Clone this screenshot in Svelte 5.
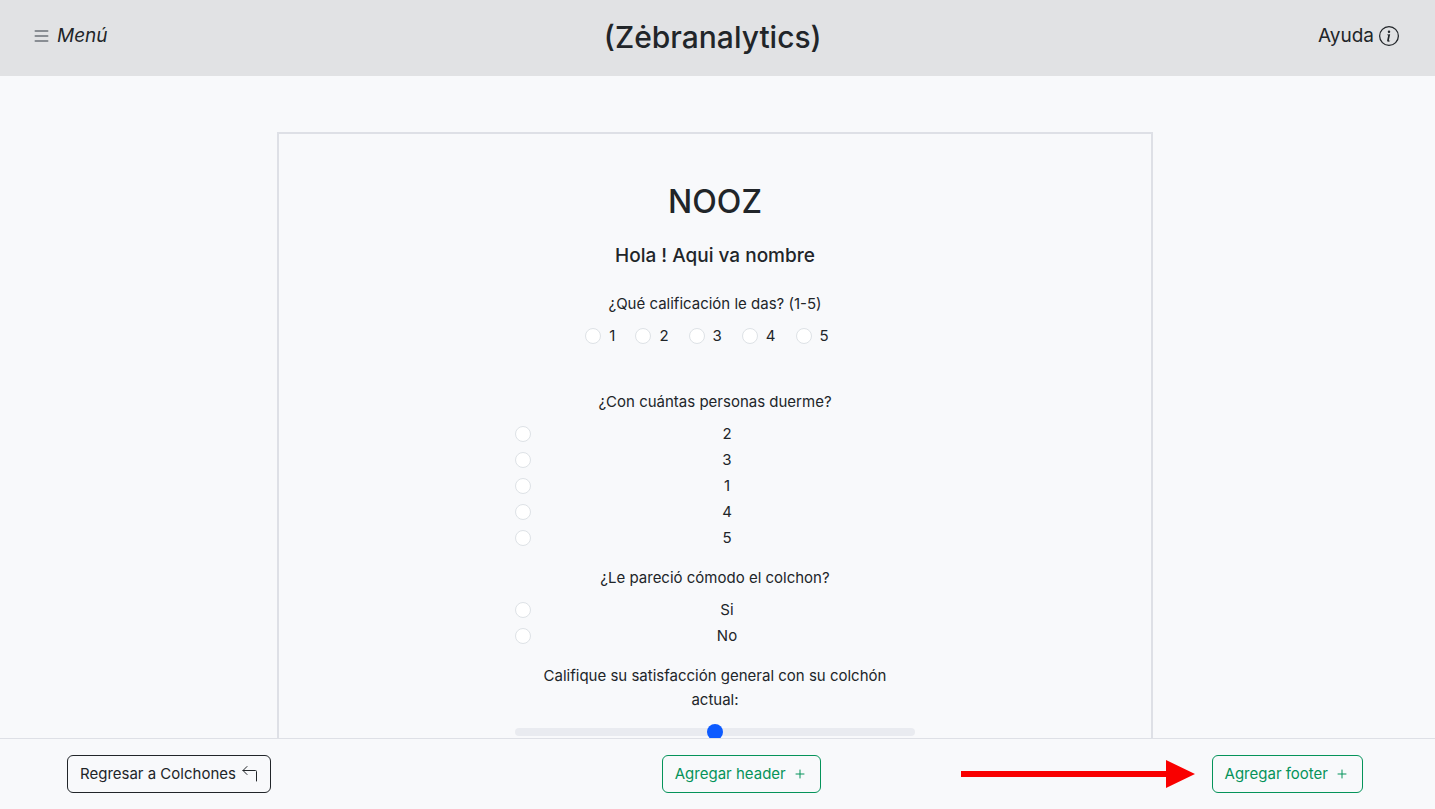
<script>
  const scores = ['1', '2', '3', '4', '5'];
  const choices = [
    { id: 'people', title: '¿Con cuántas personas duerme?', options: ['2', '3', '1', '4', '5'] },
    { id: 'comfort', title: '¿Le pareció cómodo el colchon?', options: ['Si', 'No'] }
  ];
  let satisfaction = $state(50);
</script>

<div class="page">
  <header class="topbar">
    <button class="nav-item menu" type="button">
      <svg class="bars" viewBox="0 0 14 12" aria-hidden="true">
        <path d="M.8 1h12.4M.8 6h12.4M.8 11h12.4" />
      </svg>
      <em>Menú</em>
    </button>
    <h1 class="brand">(Zėbranalytics)</h1>
    <a class="nav-item" href="#ayuda">
      Ayuda
      <svg class="info" viewBox="0 0 16 16" aria-hidden="true">
        <path d="M8 15A7 7 0 1 1 8 1a7 7 0 0 1 0 14m0 1A8 8 0 1 0 8 0a8 8 0 0 0 0 16" />
        <path d="m8.93 6.588-2.29.287-.082.38.45.083c.294.07.352.176.288.469l-.738 3.468c-.194.897.105 1.319.808 1.319.545 0 1.178-.252 1.465-.598l.088-.416c-.2.176-.492.246-.686.246-.275 0-.375-.193-.304-.533zM9 4.5a1 1 0 1 1-2 0 1 1 0 0 1 2 0" />
      </svg>
    </a>
  </header>

  <main class="content">
    <form class="survey">
      <h2>NOOZ</h2>
      <h3>Hola ! Aqui va nombre</h3>

      <fieldset class="inline-group">
        <legend>¿Qué calificación le das? (1-5)</legend>
        <div class="inline-options">
          {#each scores as score}
            <label class="inline-option">
              <input type="radio" name="score" value={score} />
              {score}
            </label>
          {/each}
        </div>
      </fieldset>

      {#each choices as question}
        <fieldset class="group">
          <legend>{question.title}</legend>
          {#each question.options as option}
            <label class="option">
              <input type="radio" name={question.id} value={option} />
              <span>{option}</span>
            </label>
          {/each}
        </fieldset>
      {/each}

      <div class="group">
        <label class="range-label" for="satisfaction">Califique su satisfacción general con su colchón actual:</label>
        <input class="range" id="satisfaction" type="range" min="0" max="100" bind:value={satisfaction} />
      </div>
    </form>
  </main>

  <footer class="actions">
    <button class="btn dark" type="button">
      Regresar a Colchones
      <svg class="back" viewBox="0 0 16 16" aria-hidden="true">
        <path d="M5 .5L1 4.500l4 4M1 4.500h12.500a1 1 0 0 1 1 1v9.500" />
      </svg>
    </button>
    <button class="btn green" type="button">
      Agregar header
      <svg class="plus" viewBox="0 0 16 16" aria-hidden="true"><path d="M8 4v8M4 8h8" /></svg>
    </button>
    <div class="last">
      <button class="btn green" type="button">
        Agregar footer
        <svg class="plus" viewBox="0 0 16 16" aria-hidden="true"><path d="M8 4v8M4 8h8" /></svg>
      </button>
      <svg class="pointer" viewBox="0 0 234 28" aria-hidden="true">
        <path d="M0 11h205V0l29 14-29 14V17H0z" />
      </svg>
    </div>
  </footer>
</div>

<style>
  :global(body) {
    margin: 0;
    background: #f8f9fb;
  }

  .page {
    box-sizing: border-box;
    display: flex;
    flex-direction: column;
    height: 100vh;
    color: #212529;
    font: 400 15px/24px Inter, sans-serif;
  }

  .topbar {
    display: flex;
    align-items: flex-start;
    justify-content: space-between;
    padding: 16px 36px 18px 34px;
    background: #e1e2e4;
  }

  .nav-item {
    display: flex;
    align-items: center;
    gap: 5px;
    padding: 4px 0;
    border: 0;
    background: none;
    color: inherit;
    font: inherit;
    font-size: 19px;
    line-height: 32px;
    text-decoration: none;
  }

  .menu {
    gap: 8px;
  }

  .bars {
    width: 15px;
    height: 12px;
    fill: none;
    stroke: #6c7278;
    stroke-width: 1.6;
    stroke-linecap: round;
  }

  .info {
    width: 20px;
    height: 20px;
    fill: currentColor;
  }

  h1, h2, h3 {
    margin: 0;
    font-weight: 500;
  }

  .brand {
    font-size: 30px;
    line-height: 42px;
  }

  .content {
    flex: 1;
    min-height: 0;
    padding-right: 5px;
    overflow-y: auto;
    scrollbar-width: none;
  }

  .survey {
    box-sizing: border-box;
    display: flex;
    flex-direction: column;
    align-items: center;
    width: 61.2%;
    margin: 56px auto;
    padding: 48px 24px;
    border: 2px solid #dee0e6;
    text-align: center;
  }

  h2 {
    font-size: 32px;
    line-height: 40px;
  }

  h3 {
    margin: 22px 0 24px;
    font-size: 19px;
    line-height: 24px;
  }

  fieldset {
    min-width: 0;
    padding: 0;
    border: 0;
  }

  legend {
    width: 100%;
    padding: 0;
    margin-bottom: 8px;
  }

  .inline-group {
    margin: 0 0 42px;
  }

  .inline-options {
    display: flex;
    justify-content: center;
    gap: 20px;
    padding-right: 16px;
  }

  .inline-option {
    display: flex;
    align-items: center;
    gap: 8px;
  }

  .group {
    width: 100%;
    max-width: 400px;
    margin: 0 0 14px;
  }

  .option {
    display: flex;
    align-items: center;
    gap: 8px;
    margin-bottom: 2px;
  }

  .option span {
    flex: 1;
  }

  input[type='radio'] {
    appearance: none;
    box-sizing: border-box;
    width: 16px;
    height: 16px;
    margin: 0;
    border: 1px solid #dee2e6;
    border-radius: 50%;
    background: #fff;
  }

  input[type='radio']:checked {
    border: 5px solid #0d5bff;
  }

  .range-label {
    display: block;
    padding: 0 24px;
    margin-bottom: 12px;
  }

  .range {
    appearance: none;
    display: block;
    width: 100%;
    height: 16px;
    margin: 0;
    background: none;
  }

  .range::-webkit-slider-runnable-track {
    height: 8px;
    border-radius: 4px;
    background: #e9ebf0;
  }

  .range::-webkit-slider-thumb {
    appearance: none;
    width: 16px;
    height: 16px;
    margin-top: -4px;
    border-radius: 50%;
    background: #0d5bff;
  }

  .actions {
    display: flex;
    align-items: center;
    justify-content: space-between;
    padding: 16px 72px 16px 67px;
    border-top: 1px solid #dee0e6;
  }

  .btn {
    display: flex;
    align-items: center;
    gap: 6px;
    padding: 6px 12px;
    border: 1px solid;
    border-radius: 6px;
    background: none;
    font: inherit;
    white-space: nowrap;
  }

  .dark {
    color: #212529;
  }

  .green {
    color: #05935a;
  }

  .back, .plus {
    width: 16px;
    height: 16px;
    fill: none;
    stroke: currentColor;
    stroke-linecap: round;
    stroke-linejoin: round;
  }

  .last {
    position: relative;
  }

  .pointer {
    position: absolute;
    top: 5px;
    right: calc(100% + 17px);
    width: 234px;
    height: 28px;
    fill: #f90000;
    pointer-events: none;
  }
</style>
